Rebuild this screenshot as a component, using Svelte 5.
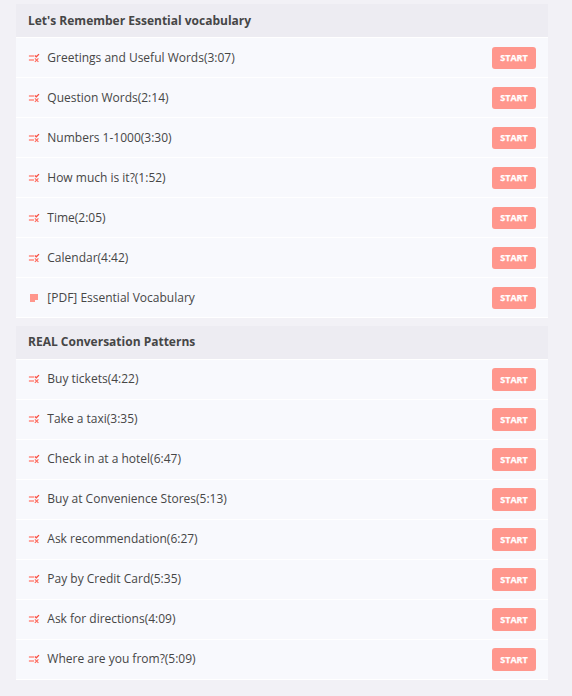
<script>
  const sections = [
    {
      title: "Let's Remember Essential vocabulary",
      lessons: [
        { name: 'Greetings and Useful Words(3:07)' },
        { name: 'Question Words(2:14)' },
        { name: 'Numbers 1-1000(3:30)' },
        { name: 'How much is it?(1:52)' },
        { name: 'Time(2:05)' },
        { name: 'Calendar(4:42)' },
        { name: '[PDF] Essential Vocabulary', note: true },
      ],
    },
    {
      title: 'REAL Conversation Patterns',
      lessons: [
        { name: 'Buy tickets(4:22)' },
        { name: 'Take a taxi(3:35)' },
        { name: 'Check in at a hotel(6:47)' },
        { name: 'Buy at Convenience Stores(5:13)' },
        { name: 'Ask recommendation(6:27)' },
        { name: 'Pay by Credit Card(5:35)' },
        { name: 'Ask for directions(4:09)' },
        { name: 'Where are you from?(5:09)' },
      ],
    },
  ];
</script>

<main>
  {#each sections as section, i}
    <section class:lower={i > 0}>
      <h2>{section.title}</h2>
      <ul>
        {#each section.lessons as lesson}
          <li>
            <svg class="icon" width="12" height="12" viewBox="0 0 12 12" aria-hidden="true">
              {#if lesson.note}
                <path d="M2 2h8v6H7v2H2z" fill="#ff968c" />
              {:else}
                <path d="M.9 4h5.1M.9 8h5.1" stroke="#ff8a80" stroke-width="1.7" fill="none" />
                <path d="M6.8 3.4l1.5 1.4L11 2.1" stroke="#fa4e42" stroke-width="1.3" fill="none" />
                <path d="M6.9 6.3l3.5 3.5M10.4 6.3L6.9 9.8" stroke="#ff6c60" stroke-width="1.2" fill="none" />
              {/if}
            </svg>
            <span class="name">{lesson.name}</span>
            <button>START</button>
          </li>
        {/each}
      </ul>
    </section>
  {/each}
</main>

<style>
  :global(body) {
    background: #f2f1f6;
  }
  main {
    box-sizing: border-box;
    min-height: 696px;
    padding: 4px 24px 16px 16px;
    display: flex;
    flex-direction: column;
    gap: 8px;
    font-family: 'Open Sans', sans-serif;
    color: #464646;
  }
  h2 {
    box-sizing: border-box;
    height: 34px;
    margin: 0;
    padding: 0 12px;
    border-bottom: 1px solid #fff;
    background: #edecf2;
    font-size: 12px;
    line-height: 33px;
    font-weight: 700;
  }
  ul {
    margin: 0;
    padding: 0;
    list-style: none;
  }
  li {
    box-sizing: border-box;
    height: 40px;
    padding: 0 12px;
    display: flex;
    align-items: center;
    border-bottom: 1px solid #fff;
    background: #f8f9fd;
    font-size: 12px;
  }
  .icon {
    flex: none;
    margin: 1px 7.3px 0 0;
  }
  .name {
    flex: 1;
    line-height: 39px;
  }
  button {
    width: 44px;
    height: 22px;
    padding: 0;
    border: 0;
    border-radius: 3px;
    background: #ff978d;
    color: #fff;
    font: 700 9px/22px 'Open Sans', sans-serif;
    -webkit-text-stroke: 0.25px #fff;
  }
  .lower h2 {
    line-height: 31px;
  }
  .lower .icon {
    margin-top: -1px;
  }
  .lower .name {
    line-height: 37px;
    padding-bottom: 2px;
  }
  .lower button {
    height: 23px;
    line-height: 23px;
  }
</style>
